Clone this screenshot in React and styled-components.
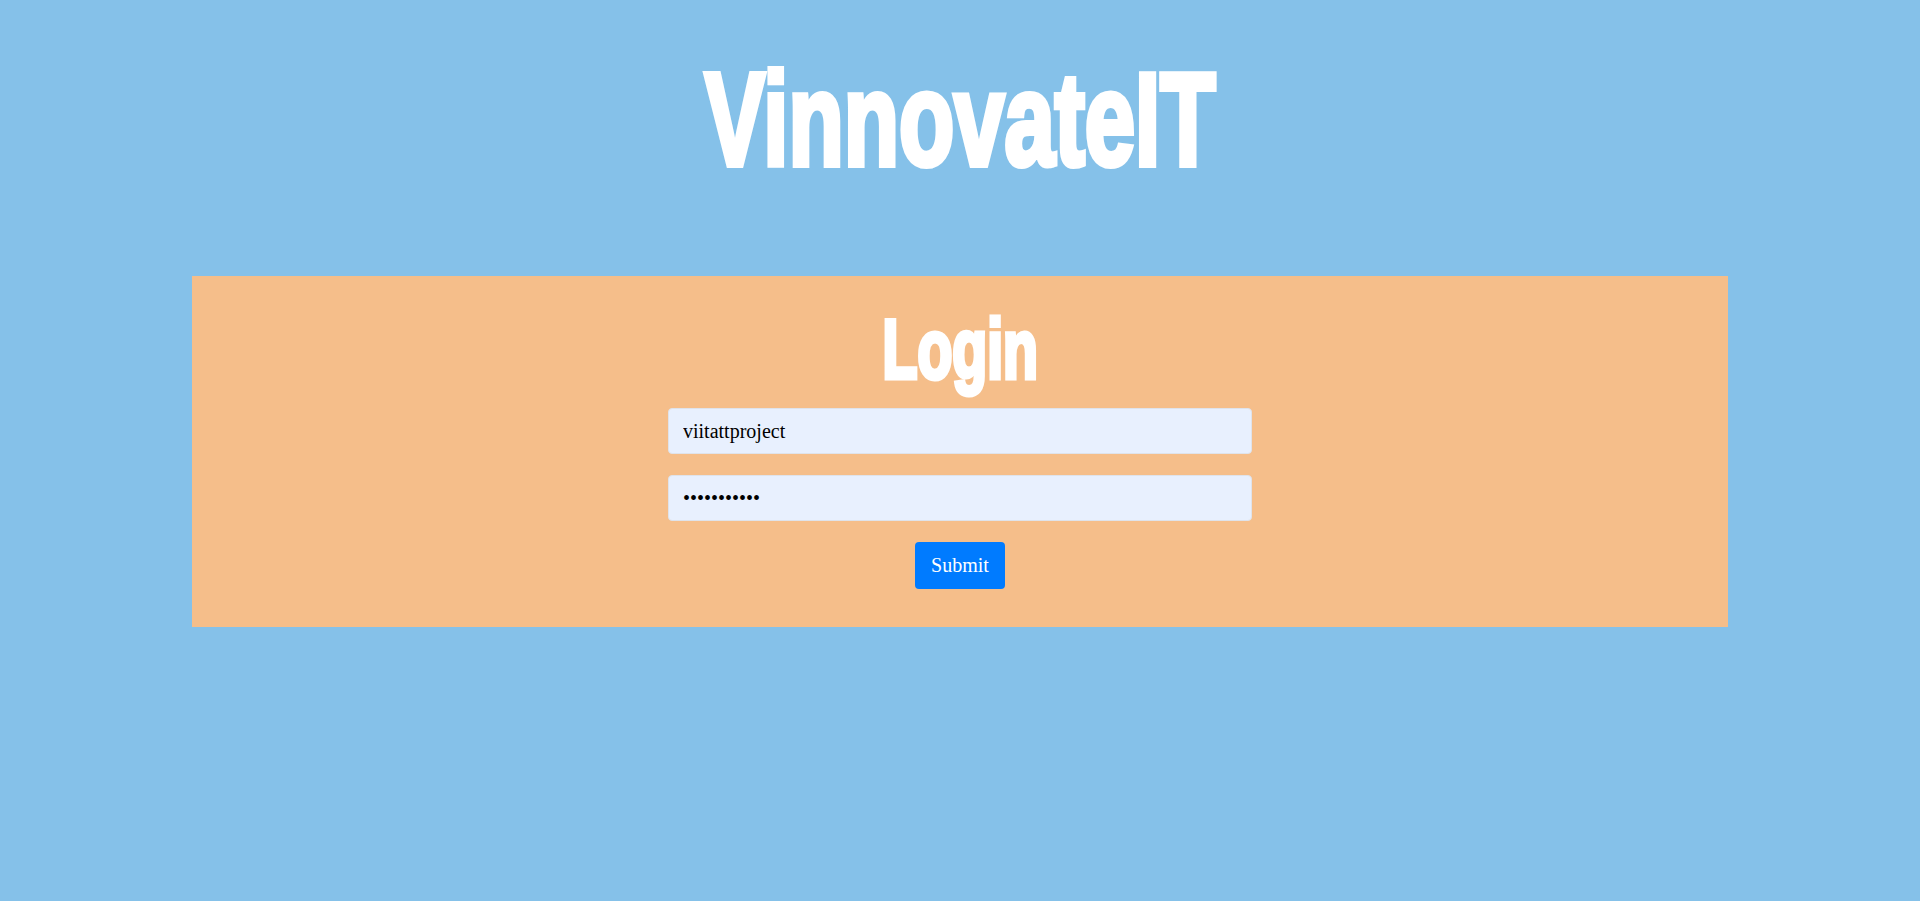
import React from 'react'
import styled, { createGlobalStyle } from 'styled-components'

const GlobalStyle = createGlobalStyle`
    html, body {
        margin: 0;
        padding: 0;
        background-color: #85C1E9;
        font-family: "Liberation Serif", "Times New Roman", serif;
    }
`

const Page = styled.div`
    min-height: 901px;
    background-color: #85C1E9;
    display: flex;
    flex-direction: column;
    align-items: center;
`

const Header = styled.header`
    padding-top: 54px;
    height: 276px;
    box-sizing: border-box;
    width: 100%;
    display: flex;
    justify-content: center;
`

const Heading = styled.h1`
    margin: 0;
    display: inline-block;
    font-family: "Liberation Sans", Arial, sans-serif;
    font-weight: 700;
    font-size: ${p => p.size}px;
    line-height: 1;
    color: #fff;
    -webkit-text-stroke: ${p => p.stroke}px #fff;
    transform: scaleX(${p => p.squeeze});
    transform-origin: center;
    white-space: nowrap;
`

const Panel = styled.section`
    width: 80%;
    box-sizing: border-box;
    background-color: #F5BE8A;
    padding: 31px 0 38px;
    display: flex;
    flex-direction: column;
    align-items: center;
`

const Form = styled.form`
    margin-top: 17px;
    display: flex;
    flex-direction: column;
    align-items: center;
    gap: 21px;
`

const Field = styled.input`
    width: 584px;
    height: 46px;
    box-sizing: border-box;
    padding: 0 14px;
    border: 1px solid #dfe3ea;
    border-radius: 4px;
    background-color: #E8F0FE;
    font-family: "Liberation Serif", "Times New Roman", serif;
    font-size: 20px;
    color: #000;
    outline: none;
`

const SubmitButton = styled.button`
    width: 90px;
    height: 47px;
    border: none;
    border-radius: 4px;
    background-color: #007BFF;
    color: #fff;
    font-family: "Liberation Serif", "Times New Roman", serif;
    font-size: 20px;
    cursor: pointer;
`

const App = () => {
    return (
        <Page>
            <GlobalStyle />
            <Header>
                <Heading size={131} stroke={6} squeeze={0.69}>VinnovateIT</Heading>
            </Header>
            <Panel>
                <Heading as="h2" size={84} stroke={5} squeeze={0.68}>Login</Heading>
                <Form onSubmit={e => e.preventDefault()}>
                    <Field type="text" defaultValue="viitattproject" />
                    <Field type="password" defaultValue="viitattproj" />
                    <SubmitButton type="submit">Submit</SubmitButton>
                </Form>
            </Panel>
        </Page>
    )
}

export default App
